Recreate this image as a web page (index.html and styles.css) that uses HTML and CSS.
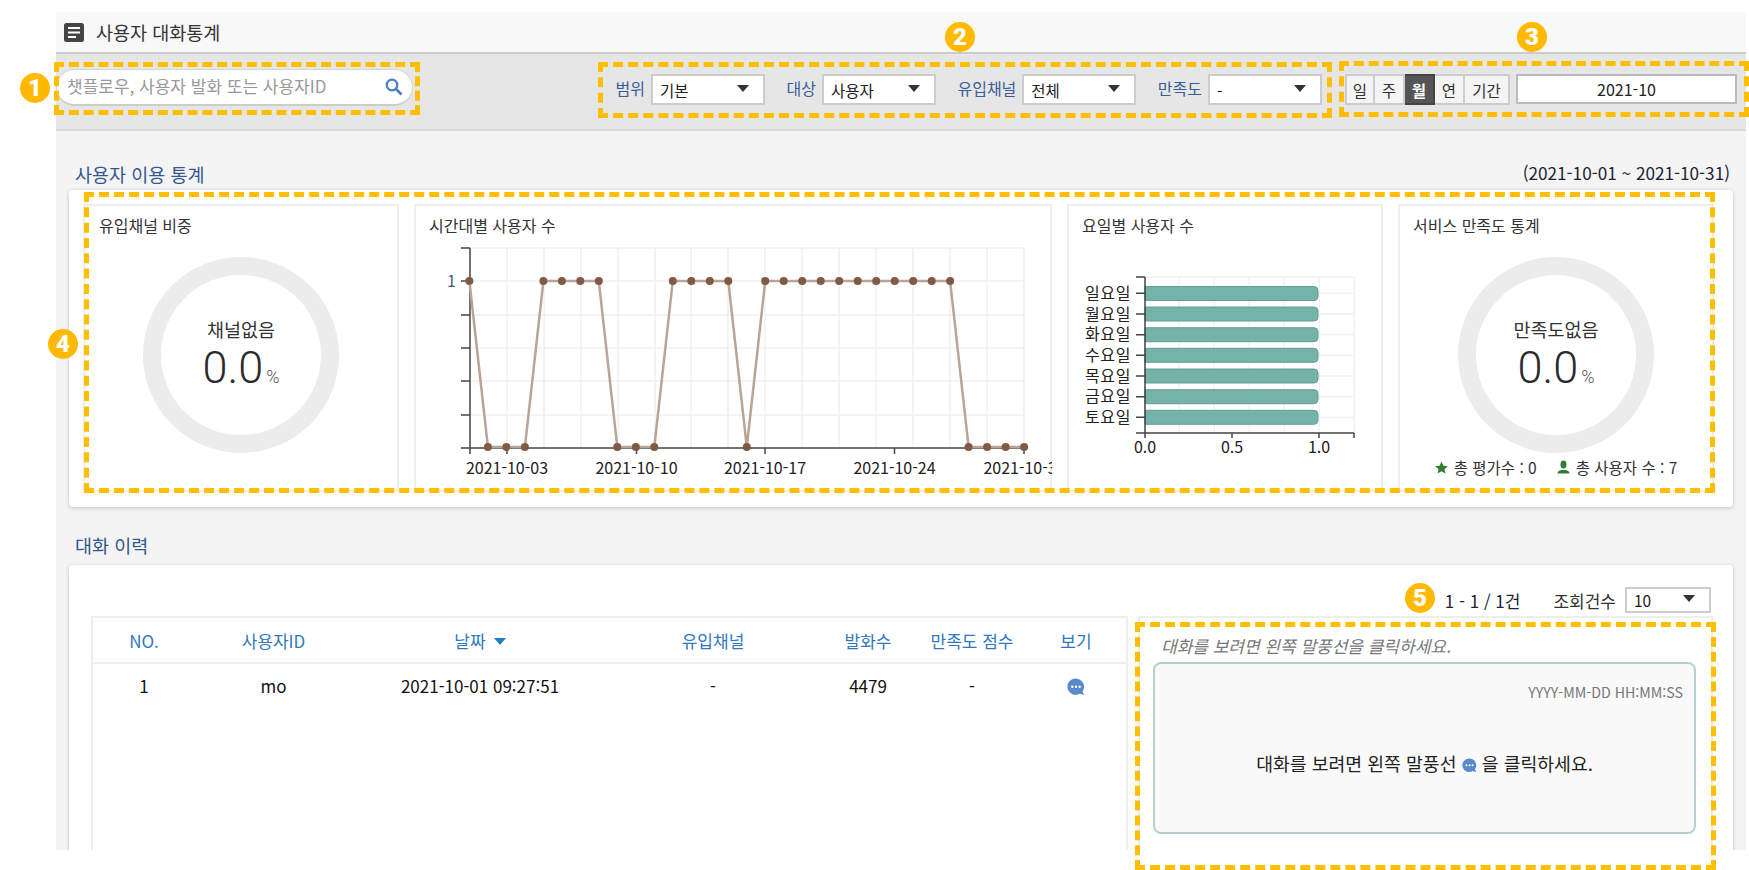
FILE: index.html
```html
<!DOCTYPE html>
<html lang="ko">
<head>
  <meta charset="UTF-8" />
  <meta name="viewport" content="width=device-width, initial-scale=1.0"/>
  <title>사용자 대화통계</title>
  <link rel="stylesheet" href="styles.css">
</head>
<body>

  <svg class="defs" width="0" height="0">
    <symbol id="chat" viewBox="0 0 18 18">
      <path d="M9 0.5a8.2 8.2 0 0 1 8 8.2c0 2-.6 3.500-1.500 4.700l1.700 3.600-4.300-1.300a8.200 8.200 0 1 1-3.900-15.200z" fill="#5b8acb"/>
      <circle cx="5.300" cy="8.700" r="1.200" fill="#fff"/>
      <circle cx="9" cy="8.700" r="1.200" fill="#fff"/>
      <circle cx="12.700" cy="8.700" r="1.200" fill="#fff"/>
    </symbol>
  </svg>

  <div class="app">
    <div class="titlebar">
      <svg class="title-icon" width="20" height="19" viewBox="0 0 20 19">
        <rect width="20" height="19" rx="2.500" fill="#444"/>
        <path d="M4 5h12M4 9.500h12M4 14h8" stroke="#fff" stroke-width="2"/>
      </svg>
      <span>사용자 대화통계</span>
    </div>

    <div class="filterbar">
      <div class="search">
        <span class="search-text">챗플로우, 사용자 발화 또는 사용자ID</span>
        <svg width="18" height="18" viewBox="0 0 18 18">
          <circle cx="7" cy="7" r="5.300" fill="none" stroke="#4a7fc1" stroke-width="2.200"/>
          <path d="M11 11l5.500 5.500" stroke="#4a7fc1" stroke-width="2.600"/>
        </svg>
      </div>

      <div class="filters">
        <label class="filter-label">범위</label>
        <div class="select"><span>기본</span><i class="caret"></i></div>
        <label class="filter-label">대상</label>
        <div class="select"><span>사용자</span><i class="caret"></i></div>
        <label class="filter-label">유입채널</label>
        <div class="select"><span>전체</span><i class="caret"></i></div>
        <label class="filter-label">만족도</label>
        <div class="select"><span>-</span><i class="caret"></i></div>
      </div>

      <div class="period">
        <div class="seg">
          <button class="seg-btn">일</button>
          <button class="seg-btn">주</button>
          <button class="seg-btn active">월</button>
          <button class="seg-btn">연</button>
          <button class="seg-btn wide">기간</button>
        </div>
        <div class="date-input">2021-10</div>
      </div>
    </div>

    <div class="section-head first">
      <h2>사용자 이용 통계</h2>
      <span class="range">(2021-10-01 ~ 2021-10-31)</span>
    </div>

    <div class="card stats">
      <div class="panel">
        <h3>유입채널 비중</h3>
        <div class="donut">
          <span class="donut-label">채널없음</span>
          <span class="donut-value">0.0<small>%</small></span>
        </div>
      </div>

      <div class="panel">
        <h3>시간대별 사용자 수</h3>
        <svg class="chart" width="636" height="254" viewBox="416 236 636 254">
          <g class="grid">
            <path d="M470 248H1024M470 281H1024M470 315H1024M470 348H1024M470 381H1024M470 415H1024"/>
            <path d="M507 248V448M544 248V448M581 248V448M618 248V448M655 248V448M691 248V448M728 248V448M765 248V448M802 248V448M839 248V448M876 248V448M913 248V448M950 248V448M987 248V448M1024 248V448"/>
          </g>
          <path class="axis" d="M470 248V448M461 448H1024M461 248H470M461 281H470M461 315H470M461 348H470M461 381H470M461 415H470M470 448V454M507 448V454M636.500 448V454M765 448V454M894.500 448V454M1024 448V454"/>
          <polyline class="line" points="469.400,281 487.900,447 506.400,447 524.900,447 543.400,281 561.900,281 580.300,281 598.800,281 617.300,447 635.800,447 654.300,447 672.800,281 691.300,281 709.800,281 728.300,281 746.800,447 765.200,281 783.700,281 802.200,281 820.700,281 839.200,281 857.700,281 876.200,281 894.700,281 913.200,281 931.700,281 950.100,281 968.600,447 987.100,447 1005.600,447 1024.100,447"/>
          <g class="dots">
            <circle cx="469.400" cy="281" r="4"/><circle cx="487.900" cy="447" r="4"/><circle cx="506.400" cy="447" r="4"/><circle cx="524.900" cy="447" r="4"/>
            <circle cx="543.400" cy="281" r="4"/><circle cx="561.900" cy="281" r="4"/><circle cx="580.300" cy="281" r="4"/><circle cx="598.800" cy="281" r="4"/>
            <circle cx="617.300" cy="447" r="4"/><circle cx="635.800" cy="447" r="4"/><circle cx="654.300" cy="447" r="4"/>
            <circle cx="672.800" cy="281" r="4"/><circle cx="691.300" cy="281" r="4"/><circle cx="709.800" cy="281" r="4"/><circle cx="728.300" cy="281" r="4"/>
            <circle cx="746.800" cy="447" r="4"/>
            <circle cx="765.200" cy="281" r="4"/><circle cx="783.700" cy="281" r="4"/><circle cx="802.200" cy="281" r="4"/><circle cx="820.700" cy="281" r="4"/>
            <circle cx="839.200" cy="281" r="4"/><circle cx="857.700" cy="281" r="4"/><circle cx="876.200" cy="281" r="4"/><circle cx="894.700" cy="281" r="4"/>
            <circle cx="913.200" cy="281" r="4"/><circle cx="931.700" cy="281" r="4"/><circle cx="950.100" cy="281" r="4"/>
            <circle cx="968.600" cy="447" r="4"/><circle cx="987.100" cy="447" r="4"/><circle cx="1005.600" cy="447" r="4"/><circle cx="1024.100" cy="447" r="4"/>
          </g>
          <text class="tick-y" x="456" y="287" text-anchor="end">1</text>
          <g class="tick" text-anchor="middle">
            <text x="507" y="474">2021-10-03</text>
            <text x="636.500" y="474">2021-10-10</text>
            <text x="765" y="474">2021-10-17</text>
            <text x="894.500" y="474">2021-10-24</text>
            <text x="1024.500" y="474">2021-10-31</text>
          </g>
        </svg>
      </div>

      <div class="panel">
        <h3>요일별 사용자 수</h3>
        <svg class="chart" width="312" height="254" viewBox="1069 236 312 254">
          <g class="grid">
            <path d="M1145 277H1354M1145 293.300H1354M1145 314H1354M1145 334.700H1354M1145 355.300H1354M1145 376H1354M1145 396.700H1354M1145 417.300H1354"/>
            <path d="M1179.300 277V433M1214.300 277V433M1249.300 277V433M1284.300 277V433M1319.300 277V433M1354.300 277V433"/>
          </g>
          <g class="bars">
            <path d="M1145 286.500h169a4 4 0 0 1 4 4v6a4 4 0 0 1-4 4h-169z"/>
            <path d="M1145 307h169a4 4 0 0 1 4 4v6a4 4 0 0 1-4 4h-169z"/>
            <path d="M1145 327.700h169a4 4 0 0 1 4 4v6a4 4 0 0 1-4 4h-169z"/>
            <path d="M1145 348.300h169a4 4 0 0 1 4 4v6a4 4 0 0 1-4 4h-169z"/>
            <path d="M1145 369h169a4 4 0 0 1 4 4v6a4 4 0 0 1-4 4h-169z"/>
            <path d="M1145 389.700h169a4 4 0 0 1 4 4v6a4 4 0 0 1-4 4h-169z"/>
            <path d="M1145 410.300h169a4 4 0 0 1 4 4v6a4 4 0 0 1-4 4h-169z"/>
          </g>
          <path class="axis" d="M1145 277V438M1136 433H1354M1136 277H1145M1136 293.300H1145M1136 314H1145M1136 334.700H1145M1136 355.300H1145M1136 376H1145M1136 396.700H1145M1136 417.300H1145M1232 433V438M1319 433V438M1354 433V438"/>
          <g class="tick days" text-anchor="end">
            <text x="1131" y="299">일요일</text>
            <text x="1131" y="320">월요일</text>
            <text x="1131" y="340">화요일</text>
            <text x="1131" y="361">수요일</text>
            <text x="1131" y="382">목요일</text>
            <text x="1131" y="402">금요일</text>
            <text x="1131" y="423">토요일</text>
          </g>
          <g class="tick" text-anchor="middle">
            <text x="1145" y="453">0.0</text>
            <text x="1232" y="453">0.5</text>
            <text x="1319" y="453">1.0</text>
          </g>
        </svg>
      </div>

      <div class="panel">
        <h3>서비스 만족도 통계</h3>
        <div class="donut">
          <span class="donut-label">만족도없음</span>
          <span class="donut-value">0.0<small>%</small></span>
        </div>
        <div class="totals">
          <svg width="13" height="13" viewBox="0 0 24 24"><path d="M12 1l3.400 7.600 8.200.9-6.100 5.500 1.700 8.100L12 19l-7.200 4.100 1.700-8.100L.4 9.500l8.200-.9z" fill="#2e7d32"/></svg>
          <span class="total-text">총 평가수 : 0</span>
          <svg class="person" width="13" height="14" viewBox="0 0 13 14"><ellipse cx="6.500" cy="4.500" rx="3" ry="4" fill="#2e7d32"/><path d="M0.500 13.500c0-2 1.500-3 4-3.500h4c2.500.5 4 1.500 4 3.500z" fill="#2e7d32"/></svg>
          <span class="total-text">총 사용자 수 : 7</span>
        </div>
      </div>
    </div>

    <div class="section-head">
      <h2>대화 이력</h2>
    </div>

    <div class="card history">
      <div class="pager">
        <span class="pager-count">1 - 1 / 1건</span>
        <span class="pager-label">조회건수</span>
        <div class="select small"><span>10</span><i class="caret"></i></div>
      </div>
      <div class="history-body">
        <div class="table-wrap">
          <table class="log">
            <thead>
              <tr>
                <th class="c-no">NO.</th>
                <th class="c-user">사용자ID</th>
                <th class="c-date">날짜<i class="sort"></i></th>
                <th class="c-channel">유입채널</th>
                <th class="c-count">발화수</th>
                <th class="c-score">만족도 점수</th>
                <th class="c-view">보기</th>
              </tr>
            </thead>
            <tbody>
              <tr>
                <td>1</td>
                <td>mo</td>
                <td>2021-10-01 09:27:51</td>
                <td>-</td>
                <td>4479</td>
                <td>-</td>
                <td><svg class="chat-icon" width="18" height="18"><use href="#chat"/></svg></td>
              </tr>
            </tbody>
          </table>
        </div>
        <div class="detail">
          <p class="hint">대화를 보려면 왼쪽 말풍선을 클릭하세요.</p>
          <div class="chat-box">
            <div class="stamp">YYYY-MM-DD HH:MM:SS</div>
            <div class="chat-msg">대화를 보려면 왼쪽 말풍선 <svg class="chat-inline" width="15" height="15"><use href="#chat"/></svg> 을 클릭하세요.</div>
          </div>
        </div>
      </div>
    </div>
  </div>

  <!-- callouts drawn over the screenshot -->
  <div class="callout box-1"></div>
  <div class="callout box-2"></div>
  <div class="callout box-3"></div>
  <div class="callout box-4"></div>
  <div class="callout box-5"></div>
  <span class="badge badge-1">1</span>
  <span class="badge badge-2">2</span>
  <span class="badge badge-3">3</span>
  <span class="badge badge-4">4</span>
  <span class="badge badge-5">5</span>

</body>
</html>
```

FILE: styles.css
```css
html, body {
  height: 870px;
  overflow: hidden;
}
body {
  margin: 0;
  position: relative;
  background: #fff;
  color: #222;
  font-family: "Noto Sans CJK KR", "Noto Sans", sans-serif;
  font-size: 16px;
}
.defs {
  position: absolute;
}
.app {
  margin: 12px 0 0 56px;
  width: 1690px;
  height: 838px;
  background: #f4f4f4;
  overflow: hidden;
}

/* title */
.titlebar {
  height: 42px;
  box-sizing: border-box;
  background: #f8f8f8;
  border-bottom: 2px solid #ccc;
  display: flex;
  align-items: center;
  gap: 12px;
  padding-left: 8px;
  font-size: 18.500px;
  color: #333;
}

/* filter bar */
.filterbar {
  height: 77px;
  box-sizing: border-box;
  background: #e6e6e6;
  border-bottom: 2px solid #d8d8d8;
  display: flex;
  align-items: flex-start;
  padding: 15px 9px 0 0;
}
.search {
  width: 357px;
  height: 37px;
  box-sizing: border-box;
  background: #fff;
  border: 1px solid #d5d5d5;
  border-bottom: 2px solid #ccc;
  border-radius: 19px;
  display: flex;
  align-items: center;
  justify-content: space-between;
  padding: 0 9px 0 10px;
}
.search-text {
  color: #999;
  font-size: 17px;
  white-space: nowrap;
  margin-top: -3px;
}
.filters {
  margin-left: auto;
  margin-top: 5px;
  display: flex;
  align-items: center;
}
.filter-label {
  color: #3b5c96;
  font-size: 16px;
  margin: -3px 6px 0 21.500px;
  white-space: nowrap;
}
.select {
  width: 114px;
  height: 31px;
  box-sizing: border-box;
  background: #fff;
  border: 2px solid #ccc;
  display: flex;
  align-items: center;
  justify-content: space-between;
  padding: 0 14px 0 7px;
  font-size: 15.500px;
  color: #222;
}
.caret {
  width: 0;
  height: 0;
  border-left: 6px solid transparent;
  border-right: 6px solid transparent;
  border-top: 7px solid #333;
  margin-top: -3px;
}
.period {
  display: flex;
  margin: 5px 0 0 23px;
}
.seg {
  display: flex;
  height: 31px;
}
.seg-btn {
  width: 30px;
  padding: 0;
  background: #f4f4f4;
  border: 2px solid #ccc;
  border-left-width: 0;
  font-family: inherit;
  font-size: 15.500px;
  color: #333;
}
.seg-btn:first-child {
  border-left-width: 2px;
}
.seg-btn.active {
  background: #555;
  border-color: #444;
  color: #fff;
  font-weight: 700;
}
.seg-btn.wide {
  width: 45px;
}
.date-input {
  width: 221px;
  height: 30px;
  box-sizing: border-box;
  margin-left: 6px;
  background: #fff;
  border: 2px solid #bbb;
  text-align: center;
  line-height: 26px;
  font-size: 16px;
}

/* section headings */
.section-head {
  display: flex;
  justify-content: space-between;
  align-items: center;
  height: 40px;
  padding: 18px 16px 0 19px;
}
.section-head.first {
  height: 33px;
  padding-top: 26px;
}
.section-head h2 {
  margin: 0;
  font-size: 18.500px;
  font-weight: 400;
  color: #34588e;
}
.range {
  font-size: 17.200px;
  color: #223;
  margin-top: -2px;
}

/* cards */
.card {
  margin: 0 13px;
  background: #fff;
  border-radius: 4px;
  box-shadow: 0 1px 4px rgba(0, 0, 0, 0.2);
}
.stats {
  display: grid;
  grid-template-columns: 316px 638px 316px 316px;
  gap: 15px;
  height: 288px;
  padding: 14px 19px 15px 14px;
}
.panel {
  border: 2px solid #eee;
}
.panel h3 {
  margin: 0;
  padding: 9px 0 0 13px;
  height: 21px;
  line-height: 21px;
  font-size: 16px;
  font-weight: 400;
  color: #333;
}
.panel:first-child h3 {
  padding-left: 14px;
}
.chart {
  display: block;
}
.grid path {
  fill: none;
  stroke: #f1f1f1;
  stroke-width: 1.500;
}
.axis {
  fill: none;
  stroke: #444;
  stroke-width: 1.500;
}
.line {
  fill: none;
  stroke: #b8a598;
  stroke-width: 2.500;
}
.dots circle {
  fill: #7f5a45;
}
.tick text {
  font-size: 16px;
  fill: #222;
}
.days text {
  letter-spacing: 0.6px;
}
.tick-y {
  font-size: 16px;
  fill: #4a5a7a;
}
.bars path {
  fill: #75b3aa;
  stroke: #62a096;
  stroke-width: 1;
}

/* donuts */
.donut {
  width: 196px;
  height: 196px;
  box-sizing: border-box;
  margin: 21px auto 0;
  border: 18px solid #ececec;
  border-radius: 50%;
  display: flex;
  flex-direction: column;
  align-items: center;
  padding-top: 41px;
}
.donut-label {
  font-size: 18.500px;
  line-height: 27px;
  color: #333;
}
.donut-value {
  font-family: Roboto, sans-serif;
  font-weight: 300;
  font-size: 45px;
  line-height: 50px;
  color: #2b2b2b;
}
.donut-value small {
  font-size: 18px;
  margin-left: 3px;
  color: #555;
}
.totals {
  display: flex;
  align-items: center;
  justify-content: center;
  margin-top: 4px;
  height: 20px;
  font-size: 15.500px;
  color: #333;
}
.total-text {
  margin-left: 6px;
  white-space: nowrap;
}
.person {
  margin-left: 20px;
}

/* history */
.history {
  height: 300px;
  padding: 22px 20px 0 22px;
}
.pager {
  height: 26px;
  margin: 0 2px 3px 0;
  display: flex;
  align-items: center;
  justify-content: flex-end;
  font-size: 17px;
}
.pager-count {
  color: #223;
  margin-right: 33px;
}
.pager-label {
  margin-right: 9px;
  color: #333;
}
.select.small {
  width: 86px;
  height: 26px;
  padding: 0 14px 0 7px;
}
.history-body {
  display: flex;
  gap: 10px;
}
.table-wrap {
  width: 1037px;
  height: 260px;
  box-sizing: border-box;
  border: 2px solid #eee;
}
.log {
  width: 100%;
  table-layout: fixed;
  border-collapse: collapse;
  font-size: 17px;
}
.log th {
  height: 44px;
  padding: 0;
  font-weight: 400;
  color: #2f79bd;
  border-bottom: 2px solid #eee;
}
.log td {
  height: 42px;
  padding: 0;
  text-align: center;
  color: #111;
}
.c-no { width: 102px; }
.c-user { width: 157px; }
.c-date { width: 256px; }
.c-channel { width: 210px; }
.c-count { width: 100px; }
.c-score { width: 108px; }
.sort {
  display: inline-block;
  width: 0;
  height: 0;
  margin: 0 0 3px 8px;
  border-left: 6px solid transparent;
  border-right: 6px solid transparent;
  border-top: 7px solid #1f7fc4;
}
.chat-icon {
  display: block;
  margin: 3px auto 0;
}
.detail {
  width: 575px;
  height: 260px;
  box-sizing: border-box;
  border: 2px solid #eee;
  padding: 16px 15px 0 13px;
}
.hint {
  margin: 0 0 4px 8px;
  line-height: 24px;
  font-size: 17px;
  font-style: italic;
  color: #777;
}
.chat-box {
  height: 172px;
  box-sizing: border-box;
  background: #f9f9f9;
  border: 2px solid #b5d0d0;
  border-radius: 8px;
  padding-top: 18px;
}
.stamp {
  text-align: right;
  padding-right: 11px;
  line-height: 20px;
  font-size: 14.200px;
  color: #777;
}
.chat-msg {
  margin-top: 49px;
  text-align: center;
  line-height: 24px;
  font-size: 18.300px;
  color: #222;
}
.chat-inline {
  vertical-align: -2px;
}

/* yellow callouts */
.callout {
  position: absolute;
  box-sizing: border-box;
  border: 5px dashed #ffbf00;
}
.box-1 { left: 54px; top: 62px; width: 366px; height: 53px; }
.box-2 { left: 598px; top: 62px; width: 734px; height: 56px; }
.box-3 { left: 1339px; top: 61px; width: 410px; height: 56px; }
.box-4 { left: 84px; top: 192px; width: 1631px; height: 301px; }
.box-5 { left: 1135px; top: 622px; width: 581px; height: 248px; }
.badge {
  position: absolute;
  width: 30px;
  height: 30px;
  border-radius: 50%;
  background: #ffb900;
  color: #fff;
  font-family: Roboto, sans-serif;
  font-weight: 900;
  font-size: 24px;
  line-height: 30px;
  text-align: center;
}
.badge-1 { left: 20px; top: 73px; }
.badge-2 { left: 945px; top: 22px; }
.badge-3 { left: 1517px; top: 22px; }
.badge-4 { left: 48px; top: 329px; }
.badge-5 { left: 1405px; top: 583px; }
```
